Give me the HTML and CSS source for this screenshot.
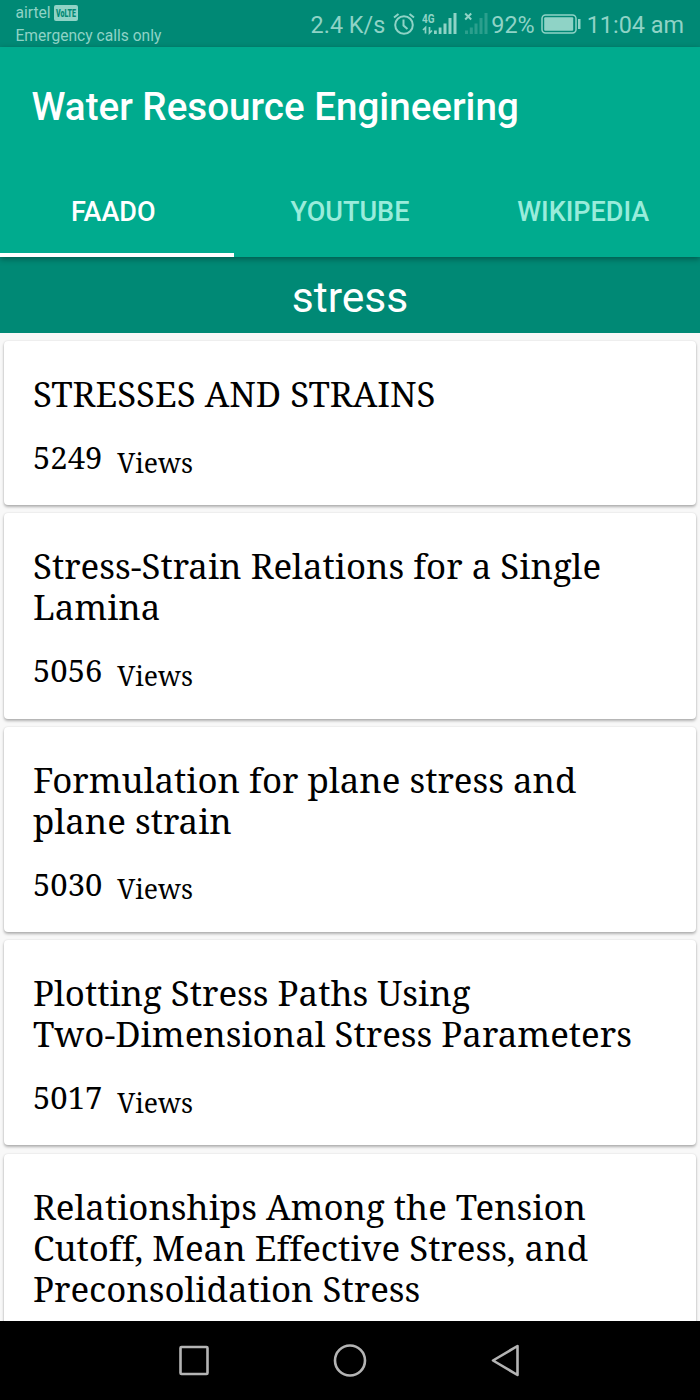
FILE: index.html
```
<!DOCTYPE html>
<html lang="en">
<head>
  <meta charset="UTF-8" />
  <meta name="viewport" content="width=device-width, initial-scale=1.0"/>
  <title>Water Resource Engineering</title>
  <link rel="stylesheet" href="styles.css">
</head>
<body>

<div class="screen">
  <div class="statusbar">
    <div class="carrier">
      <div class="carrier-name">
        <span>airtel</span>
        <svg class="volte" width="24" height="16" viewBox="0 0 24 16">
          <rect width="24" height="16" rx="2" fill="currentColor"/>
          <text x="2" y="11.500" textLength="20" lengthAdjust="spacingAndGlyphs">VoLTE</text>
        </svg>
      </div>
      <div class="carrier-info">Emergency calls only</div>
    </div>
    <div class="status-icons">
      <span class="speed">2.4 K/s</span>
      <svg class="alarm" width="22" height="22" viewBox="0 0 22 22" fill="none" stroke="currentColor" stroke-width="2">
        <circle cx="11" cy="12" r="8.8"/>
        <path d="M10.5 6.500v6l4 3.500M1 4.500 5.500 1M21 4.500 16.500 1"/>
      </svg>
      <svg class="signal" width="36" height="24" viewBox="0 0 36 24" fill="currentColor">
        <text class="net" x="0" y="10.500" textLength="12.500" lengthAdjust="spacingAndGlyphs">4G</text>
        <path d="M3.500 21.500v-6L1 18M7.500 15v6L10 18.500" stroke="currentColor" stroke-width="1.700" fill="none"/>
        <path d="M12 18.500h2.800V22H12zM16.700 15.500h2.800V22h-2.800zM21.500 11.500h3V22h-3zM26.500 6h3v16h-3zM31.500 1h3v21h-3z"/>
      </svg>
      <svg class="nosim" width="24" height="24" viewBox="0 0 24 24" fill="currentColor">
        <path d="M1.200 1.500l6 6M7.200 1.500l-6 6" stroke="currentColor" stroke-width="2"/>
        <path opacity=".3" d="M1 18.500h3V22H1zM5.800 15.500h3V22h-3zM10.500 11.500h3V22h-3zM15.500 6h3v16h-3zM20.500 1h3v21h-3z"/>
      </svg>
      <span class="percent">92%</span>
      <svg class="battery" width="40" height="20" viewBox="0 0 40 20">
        <rect x="1" y="1" width="34" height="18" rx="3.500" fill="none" stroke="currentColor" stroke-width="1.500"/>
        <rect x="3.200" y="3.200" width="29" height="13.600" rx="1" fill="currentColor"/>
        <rect x="37" y="5" width="2.500" height="10" fill="currentColor"/>
      </svg>
      <span class="time">11:04 am</span>
    </div>
  </div>

  <div class="appbar">
    <h1>Water Resource Engineering</h1>
    <div class="tabs">
      <div class="tab active">FAADO</div>
      <div class="tab">YOUTUBE</div>
      <div class="tab">WIKIPEDIA</div>
    </div>
  </div>

  <div class="search-term">stress</div>

  <div class="list">
    <div class="card">
      <h2>STRESSES AND STRAINS</h2>
      <p class="views"><span class="count">5249</span><span class="label">Views</span></p>
    </div>
    <div class="card">
      <h2>Stress-Strain Relations for a Single<br>Lamina</h2>
      <p class="views"><span class="count">5056</span><span class="label">Views</span></p>
    </div>
    <div class="card">
      <h2>Formulation for plane stress and<br>plane strain</h2>
      <p class="views"><span class="count">5030</span><span class="label">Views</span></p>
    </div>
    <div class="card">
      <h2>Plotting Stress Paths Using<br>Two-Dimensional Stress Parameters</h2>
      <p class="views"><span class="count">5017</span><span class="label">Views</span></p>
    </div>
    <div class="card">
      <h2>Relationships Among the Tension<br>Cutoff, Mean Effective Stress, and<br>Preconsolidation Stress</h2>
      <p class="views"></p>
    </div>
  </div>

  <div class="navbar">
    <svg width="32" height="32" viewBox="0 0 32 32"><rect x="2.500" y="2" width="27" height="27" rx="1"/></svg>
    <svg width="34" height="34" viewBox="0 0 34 34"><circle cx="17" cy="16.500" r="15"/></svg>
    <svg width="30" height="34" viewBox="0 0 30 34"><path d="M27.500 2v29L3 16.500z"/></svg>
  </div>
</div>

</body>
</html>
```
FILE: styles.css
```
body {
  margin: 0;
  font-family: Roboto, sans-serif;
  background-color: #f8f8f8;
}

.screen {
  display: flex;
  flex-direction: column;
  height: 1400px;
  overflow: hidden;
}

.statusbar {
  display: flex;
  justify-content: space-between;
  height: 47px;
  box-sizing: border-box;
  padding: 3px 16px 0 15.5px;
  background-color: #008975;
  color: #8fd3c6;
  flex-shrink: 0;
}

.carrier {
  font-size: 15.6px;
  line-height: 20px;
}

.carrier-name {
  display: flex;
  align-items: center;
  gap: 3px;
}

.carrier-info {
  margin-top: 3px;
}

.volte {
  overflow: visible;
}

.volte text {
  fill: #008975;
  font-size: 10px;
  font-weight: 900;
}

.status-icons {
  display: flex;
  align-items: center;
  height: 42px;
  font-size: 23.4px;
}

.speed,
.percent,
.time {
  padding-top: 1px;
}

.alarm {
  margin-left: 8px;
}

.signal {
  margin-left: 7px;
}

.net {
  font-size: 13px;
  font-weight: bold;
}

.nosim {
  margin-left: 6px;
}

.percent {
  margin-left: 3px;
}

.battery {
  margin-left: 6px;
}

.time {
  margin-left: 6px;
}

.appbar {
  height: 210px;
  background-color: #00ab8e;
  color: #fff;
  box-shadow: 0 2px 6px rgba(0,0,0,0.35);
  position: relative;
  flex-shrink: 0;
}

.appbar h1 {
  margin: 0;
  padding: 0 31.5px;
  height: 119px;
  line-height: 119px;
  font-size: 38.6px;
  font-weight: 500;
  white-space: nowrap;
}

.tabs {
  display: grid;
  grid-template-columns: 233.5px 233px 233.5px;
  height: 91px;
}

.tab {
  box-sizing: border-box;
  height: 91px;
  padding-top: 5px;
  border-bottom: 4px solid transparent;
  text-align: center;
  font-size: 27px;
  font-weight: 500;
  line-height: 82px;
  color: #99ecdb;
}

.tab.active {
  padding-right: 7px;
  border-color: #fff;
  color: #fff;
}

.search-term {
  height: 76px;
  line-height: 80px;
  background-color: #008975;
  color: #fff;
  font-size: 42.6px;
  text-align: center;
  flex-shrink: 0;
}

.list {
  flex: 1;
  display: flex;
  flex-direction: column;
  gap: 8.2px;
  padding: 8px 4px 0;
  overflow: hidden;
}

.card {
  flex-shrink: 0;
  padding: 32px 29px 27.2px;
  border-radius: 4px;
  background-color: #fff;
  box-shadow: 0 2px 3px rgba(0,0,0,0.28), 0 0 2px rgba(0,0,0,0.12);
  color: #000;
  font-family: "Noto Serif", "DejaVu Serif Condensed", "DejaVu Serif", serif;
}

.card h2 {
  margin: 0;
  font-size: 34.85px;
  font-weight: normal;
  font-variant-ligatures: none;
  line-height: 41px;
  white-space: nowrap;
}

.views {
  display: flex;
  margin: 23px 0 0;
  height: 41px;
  line-height: 41px;
}

.count {
  font-size: 31px;
}

.label {
  margin: 5.6px 0 0 15px;
  font-size: 26.6px;
}

.navbar {
  display: flex;
  justify-content: space-between;
  align-items: center;
  height: 79px;
  padding: 0 180px 0 178px;
  background-color: #000;
  flex-shrink: 0;
}

.navbar svg {
  fill: none;
  stroke: #b4b4b4;
  stroke-width: 2.6;
  stroke-linejoin: round;
}
```
